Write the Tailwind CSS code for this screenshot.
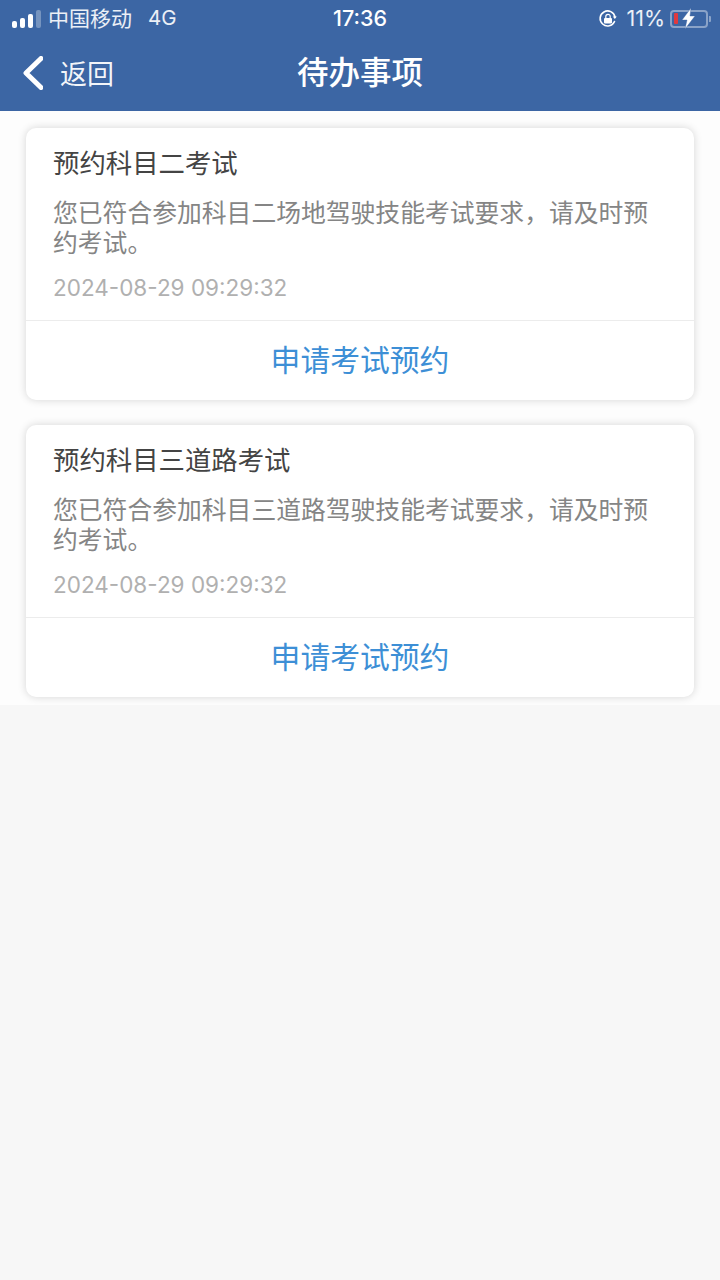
<!DOCTYPE html>
<html lang="zh">
<head>
<meta charset="utf-8">
<script src="https://cdn.jsdelivr.net/npm/@tailwindcss/browser@4"></script>
</head>
<body class="m-0">
<div class="w-[720px] h-[1280px] overflow-hidden bg-[#f7f7f7] flex flex-col font-['Inter','Noto_Sans_CJK_SC',sans-serif]">
  <header class="h-[111px] shrink-0 bg-[#3c66a4] text-white flex flex-col">
    <div class="h-[37px] shrink-0 relative flex items-center justify-between pl-[12px] pr-[9px]">
      <div class="flex items-center">
        <div class="flex items-end gap-[3px] h-[18px] mr-[7px]">
          <span class="w-[5px] h-[7px] rounded-[2px] bg-white"></span>
          <span class="w-[5px] h-[10px] rounded-[2px] bg-white"></span>
          <span class="w-[5px] h-[14px] rounded-[2px] bg-white"></span>
          <span class="w-[5px] h-[18px] rounded-[2px] bg-white/30"></span>
        </div>
        <span class="text-[21px] leading-none text-white/90">中国移动</span>
        <span class="text-[20.5px] leading-none text-white/90 ml-[16px]">4G</span>
      </div>
      <span class="absolute left-0 right-0 text-center text-[21.5px] font-medium leading-none">17:36</span>
      <div class="flex items-center">
        <svg width="20" height="20" viewBox="0 0 20 20" fill="none" class="mr-[8px]">
          <path d="M16.5 12.5A7.5 7.5 0 1 1 17 8" stroke="#fff" stroke-width="1.6" stroke-linecap="round"/>
          <path d="M14.8 7.5h4l-2 2.6z" fill="#fff"/>
          <rect x="6" y="9" width="8" height="5.5" rx="1" fill="#fff"/>
          <path d="M7.8 9V7.5a2.2 2.2 0 0 1 4.4 0V9" stroke="#fff" stroke-width="1.2"/>
        </svg>
        <span class="text-[21.5px] leading-none text-white/90">11%</span>
        <div class="ml-[5px] relative flex items-center">
          <div class="w-[38px] h-[18px] rounded-[4px] border-2 border-white/40 flex items-center pl-[2px]">
            <span class="w-[4px] h-[11px] rounded-[1px] bg-[#e0393e]"></span>
          </div>
          <span class="w-[2px] h-[6px] ml-[1px] rounded-r-[1px] bg-white/40"></span>
          <svg width="15" height="21" viewBox="0 0 15 21" class="absolute left-[11px] top-[-2px]">
            <path d="M10 0 1 12h5L4 21l10-13H9z" fill="#fff" stroke="#3c66a4" stroke-width="0.4"/>
          </svg>
        </div>
      </div>
    </div>
    <div class="flex-1 relative flex items-center pl-[23px]">
      <svg width="20" height="34" viewBox="0 0 20 34" fill="none" class="mr-[17px] mb-[3px]">
        <path d="M18 2.5 3 17l15 14.5" stroke="#fff" stroke-width="5" stroke-linecap="round" stroke-linejoin="round"/>
      </svg>
      <span class="text-[27px] leading-none font-normal text-white/95">返回</span>
      <h1 class="absolute left-0 right-0 text-center text-[31.5px] leading-none font-medium pb-[2px]">待办事项</h1>
    </div>
  </header>
  <main class="h-[594px] shrink-0 bg-[#fdfdfd] px-[26px] pt-[17px] flex flex-col gap-[25px]">
    <section class="h-[272px] shrink-0 bg-white rounded-[10px] shadow-[0_0_8px_rgba(0,0,0,0.16)] flex flex-col">
      <div class="h-[193px] shrink-0 border-b border-[#ececec] pl-[27px] pr-[40px] pt-[19px]">
        <h2 class="text-[26.4px] leading-[32px] font-normal text-[#444]">预约科目二考试</h2>
        <p class="mt-[19px] text-[24.8px] leading-[30px] text-[#858585]">您已符合参加科目二场地驾驶技能考试要求，请及时预约考试。</p>
        <p class="mt-[15px] text-[22.5px] leading-[30px] text-[#b0b0b0]">2024-08-29 09:29:32</p>
      </div>
      <a class="flex-1 flex items-center justify-center text-[29.8px] text-[#3d8fd6]">申请考试预约</a>
    </section>
    <section class="h-[272px] shrink-0 bg-white rounded-[10px] shadow-[0_0_8px_rgba(0,0,0,0.16)] flex flex-col">
      <div class="h-[193px] shrink-0 border-b border-[#ececec] pl-[27px] pr-[40px] pt-[19px]">
        <h2 class="text-[26.4px] leading-[32px] font-normal text-[#444]">预约科目三道路考试</h2>
        <p class="mt-[19px] text-[24.8px] leading-[30px] text-[#858585]">您已符合参加科目三道路驾驶技能考试要求，请及时预约考试。</p>
        <p class="mt-[15px] text-[22.5px] leading-[30px] text-[#b0b0b0]">2024-08-29 09:29:32</p>
      </div>
      <a class="flex-1 flex items-center justify-center text-[29.8px] text-[#3d8fd6]">申请考试预约</a>
    </section>
  </main>
</div>
</body>
</html>
